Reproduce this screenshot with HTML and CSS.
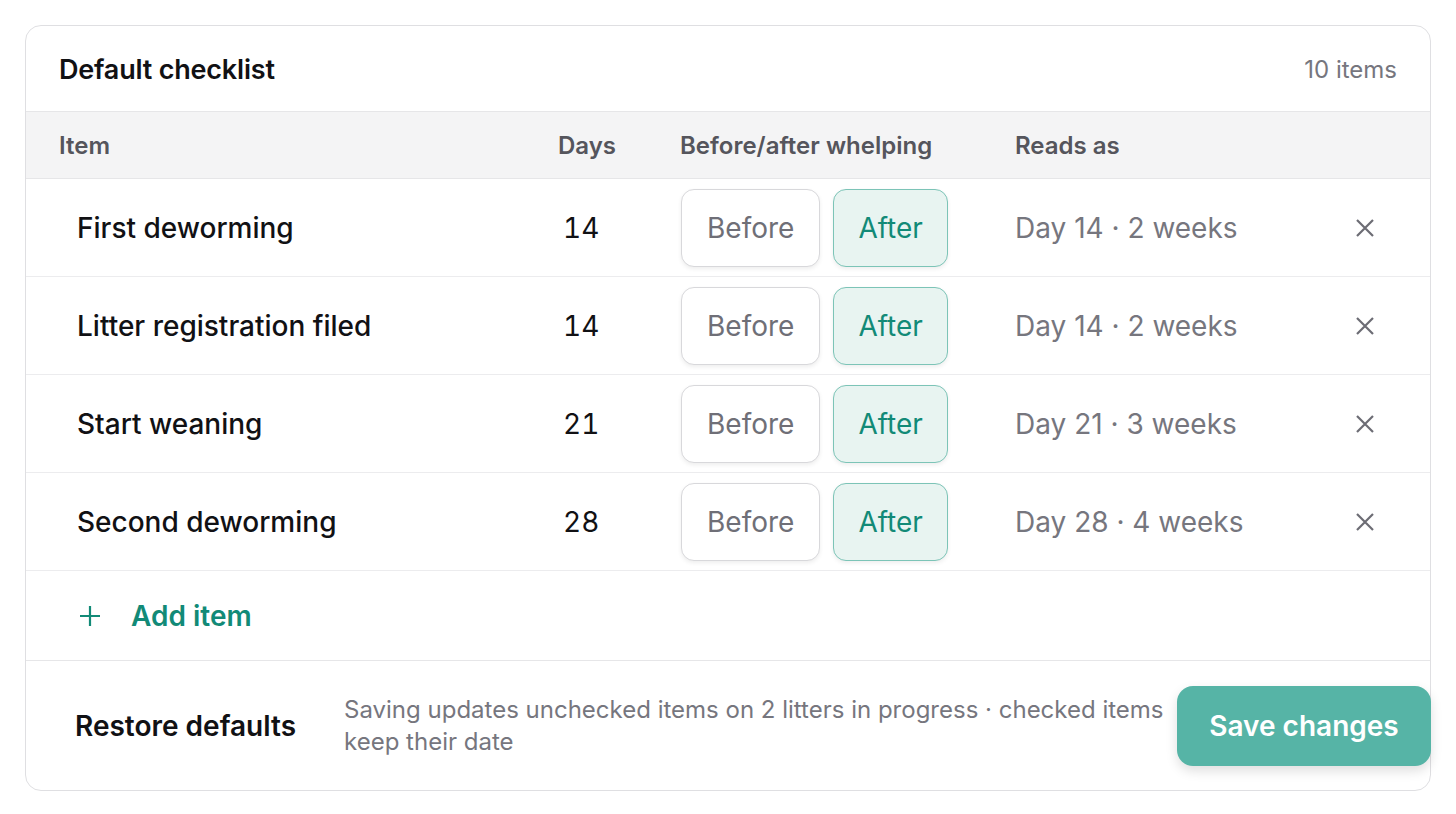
FILE: index.html
```html
<!DOCTYPE html>
<html lang="en">
<head>
<meta charset="utf-8">
<title>Default checklist</title>
<link rel="stylesheet" href="styles.css">
</head>
<body>
<section class="card">
  <header class="card-head">
    <h2 class="title">Default checklist</h2>
    <span class="count">10 items</span>
  </header>

  <div class="grid thead">
    <div>Item</div>
    <div>Days</div>
    <div>Before/after whelping</div>
    <div>Reads as</div>
    <div></div>
  </div>

  <div class="grid row">
    <div class="item">First deworming</div>
    <div class="days">14</div>
    <div class="toggle"><button class="seg">Before</button><button class="seg on">After</button></div>
    <div class="reads">Day 14 · 2 weeks</div>
    <div class="x-cell"><svg class="x" viewBox="0 0 20 20"><path d="M2 2L18 18M18 2L2 18"/></svg></div>
  </div>
  <div class="grid row">
    <div class="item">Litter registration filed</div>
    <div class="days">14</div>
    <div class="toggle"><button class="seg">Before</button><button class="seg on">After</button></div>
    <div class="reads">Day 14 · 2 weeks</div>
    <div class="x-cell"><svg class="x" viewBox="0 0 20 20"><path d="M2 2L18 18M18 2L2 18"/></svg></div>
  </div>
  <div class="grid row">
    <div class="item">Start weaning</div>
    <div class="days">21</div>
    <div class="toggle"><button class="seg">Before</button><button class="seg on">After</button></div>
    <div class="reads">Day 21 · 3 weeks</div>
    <div class="x-cell"><svg class="x" viewBox="0 0 20 20"><path d="M2 2L18 18M18 2L2 18"/></svg></div>
  </div>
  <div class="grid row">
    <div class="item">Second deworming</div>
    <div class="days">28</div>
    <div class="toggle"><button class="seg">Before</button><button class="seg on">After</button></div>
    <div class="reads">Day 28 · 4 weeks</div>
    <div class="x-cell"><svg class="x" viewBox="0 0 20 20"><path d="M2 2L18 18M18 2L2 18"/></svg></div>
  </div>

  <div class="add-row">
    <button class="add"><svg class="plus" viewBox="0 0 22 22"><path d="M11 1V21M1 11H21"/></svg><span>Add item</span></button>
  </div>

  <footer class="foot">
    <button class="restore">Restore defaults</button>
    <p class="note">Saving updates unchecked items on 2 litters in progress · checked items keep their date</p>
    <button class="save">Save changes</button>
  </footer>
</section>
</body>
</html>
```

FILE: styles.css
```css
* { box-sizing: border-box; }
html, body { background: #ffffff; }
body {
  margin: 0;
  padding: 25px;
  font-family: Inter, "Noto Sans", "Liberation Sans", sans-serif;
  color: #111114;
}
button { font-family: inherit; }

.card {
  border: 1px solid #dfdfe2;
  border-radius: 16px;
  background: #fff;
}

.card-head {
  height: 86px;
  display: flex;
  align-items: center;
  justify-content: space-between;
  padding: 2px 33px 0;
  border-bottom: 1px solid #e6e6e8;
}
.title {
  margin: 0;
  font-size: 27px;
  font-weight: 600;
  letter-spacing: -0.2px;
}
.count {
  font-size: 24px;
  color: #76767e;
}

.grid {
  display: grid;
  grid-template-columns: 499px 122px 335px 1fr 64px;
  align-items: center;
  padding: 0 33px;
}
.thead {
  height: 67px;
  padding-top: 1px;
  background: #f4f4f5;
  border-bottom: 1px solid #e6e6e8;
  font-size: 24px;
  font-weight: 600;
  color: #55555c;
}

.row {
  height: 98px;
  border-bottom: 1px solid #ececee;
}
.item {
  padding-left: 18px;
  font-size: 28px;
  font-weight: 500;
}
.days {
  padding-left: 5px;
  font-size: 28px;
  font-weight: 400;
  font-variant-numeric: tabular-nums;
}
.toggle {
  display: flex;
  gap: 13px;
  padding-left: 1px;
}
.seg {
  height: 78px;
  padding: 0 25px;
  font-size: 28px;
  font-weight: 400;
  color: #6f6f77;
  background: #fff;
  border: 1.5px solid #d8d8db;
  border-radius: 13px;
  box-shadow: 0 2px 4px rgba(0,0,0,0.07);
}
.seg.on {
  color: #128a77;
  background: #e8f4f1;
  border-color: #7cc4b7;
  padding: 0 24px;
}
.reads {
  font-size: 28px;
  color: #76767e;
}
.x-cell {
  display: flex;
  justify-content: center;
}
.x {
  width: 20px;
  height: 20px;
  stroke: #6c6c74;
  stroke-width: 2.2;
  fill: none;
}

.add-row {
  height: 90px;
  display: flex;
  align-items: center;
  padding: 0 33px;
  border-bottom: 1px solid #e6e6e8;
}
.add {
  display: flex;
  align-items: center;
  gap: 30px;
  padding: 0 20px;
  border: 0;
  background: none;
  color: #128a77;
  font-size: 28px;
  font-weight: 600;
}
.plus {
  width: 22px;
  height: 22px;
  stroke: #128a77;
  stroke-width: 2.2;
  fill: none;
}

.foot {
  height: 129px;
  display: flex;
  align-items: center;
  padding: 0 0 0 33px;
}
.restore {
  border: 0;
  background: none;
  padding: 0 16px;
  font-size: 28px;
  font-weight: 600;
  color: #111114;
  margin-right: 32px;
}
.note {
  flex: 1;
  margin: 0;
  font-size: 24px;
  line-height: 32px;
  color: #76767e;
  padding-right: 10px;
}
.save {
  flex: none;
  width: 254px;
  height: 80px;
  margin-right: -1px;
  border: 0;
  border-radius: 16px;
  background: #56b4a6;
  color: #fff;
  font-size: 28px;
  font-weight: 600;
  box-shadow: 0 5px 12px rgba(0,0,0,0.13);
}
```
